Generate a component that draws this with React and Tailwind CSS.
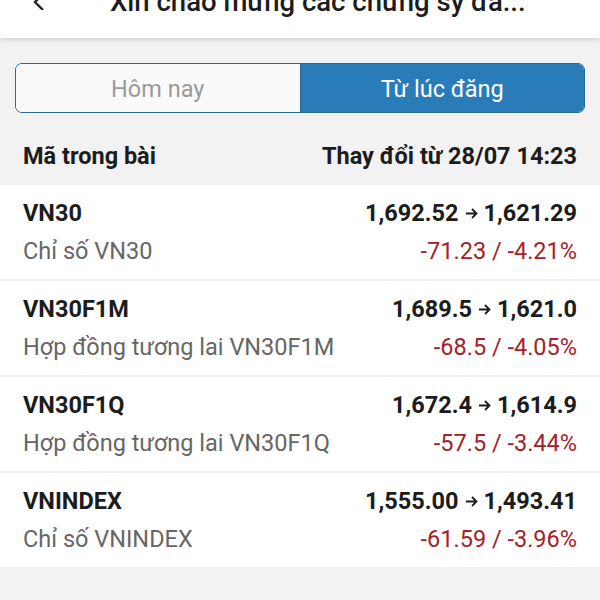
import React from 'react';

const rows = [
  { code: 'VN30', name: 'Chỉ số VN30', from: '1,692.52', to: '1,621.29', change: '-71.23 / -4.21%' },
  { code: 'VN30F1M', name: 'Hợp đồng tương lai VN30F1M', from: '1,689.5', to: '1,621.0', change: '-68.5 / -4.05%' },
  { code: 'VN30F1Q', name: 'Hợp đồng tương lai VN30F1Q', from: '1,672.4', to: '1,614.9', change: '-57.5 / -3.44%' },
  { code: 'VNINDEX', name: 'Chỉ số VNINDEX', from: '1,555.00', to: '1,493.41', change: '-61.59 / -3.96%' },
];

const Arrow = () => (
  <svg className="inline-block w-[13px] h-[13px] mx-[6px] align-[1px]" viewBox="0 0 13 13" fill="none" stroke="#1c1c1c" strokeWidth="1.8">
    <path d="M1 6.5 H11.5 M7 2 L11.5 6.5 L7 11" />
  </svg>
);

const App = () => {
  return (
    <div className="w-[600px] h-[600px] overflow-hidden bg-[#f2f2f2] font-['Roboto',sans-serif] text-[#1c1c1c]">
      {/* top bar, cut off by the screenshot */}
      <div className="h-[38px] bg-white overflow-hidden flex shadow-[0_2px_4px_rgba(0,0,0,0.12)] relative z-10">
        <svg className="ml-[31px] mt-[-6px] w-[16px] h-[16px]" viewBox="0 0 16 16" fill="none" stroke="#222" strokeWidth="2.4">
          <path d="M12 0 L4 8 L12 16" />
        </svg>
        <div className="ml-[63px] mt-[-12px] text-[27.5px] leading-[28px] font-medium whitespace-nowrap">
          Xin chào mừng các chứng sỹ đa...
        </div>
      </div>

      <div className="px-[15px] pt-[25px]">
        <div className="flex h-[50px] rounded-[7px] border-[1.5px] border-[#2b6a92] overflow-hidden text-[23.5px]">
          <div className="flex-1 flex items-center justify-center pt-[4px] bg-[#fafafa] text-[#9a9a9a] border-r border-[#2b6a92]">
            Hôm nay
          </div>
          <div className="flex-1 flex items-center justify-center pt-[4px] bg-[#2a7cb8] text-white">
            Từ lúc đăng
          </div>
        </div>
      </div>

      <div className="flex justify-between px-[23px] pt-[27px] pb-[13px] text-[23.5px] leading-[32px] font-bold">
        <span>Mã trong bài</span>
        <span>Thay đổi từ 28/07 14:23</span>
      </div>

      <div className="flex flex-col gap-[2px]">
        {rows.map(row => (
          <div key={row.code} className="bg-white px-[23px] pt-[12px] pb-[12px] flex flex-col gap-[6px] text-[23.5px] leading-[32px]">
            <div className="flex justify-between font-bold h-[32px]">
              <span>{row.code}</span>
              <span className="whitespace-nowrap">
                {row.from}<Arrow />{row.to}
              </span>
            </div>
            <div className="flex justify-between h-[32px]">
              <span className="text-[#666]">{row.name}</span>
              <span className="text-[#a3222a]">{row.change}</span>
            </div>
          </div>
        ))}
      </div>
    </div>
  );
};

export default App;
